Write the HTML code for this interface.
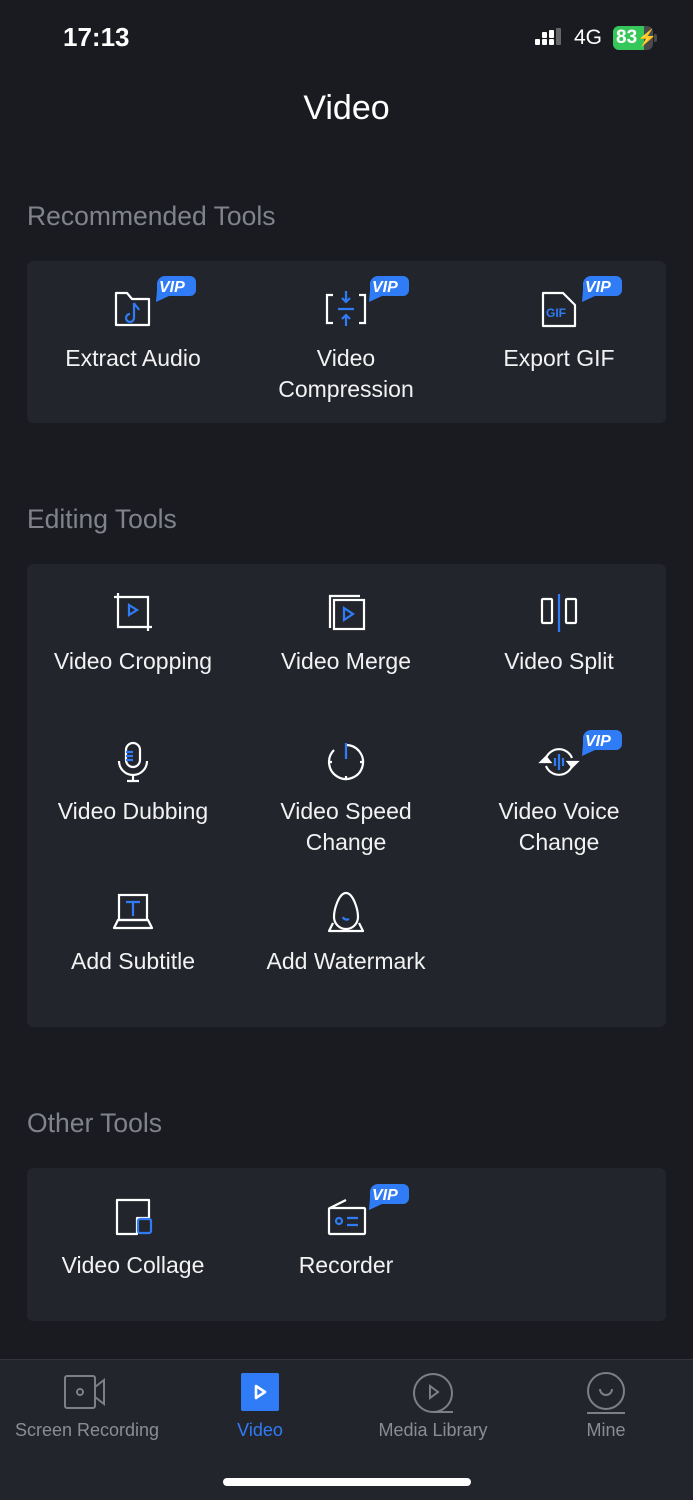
<!DOCTYPE html>
<html><head><meta charset="utf-8"><style>
*{margin:0;padding:0;box-sizing:border-box}
body{width:693px;height:1500px;background:#1a1b20;font-family:"Liberation Sans",sans-serif;color:#fff;position:relative;overflow:hidden}
.a{position:absolute}
.sec{position:absolute;left:27px;font-size:26.5px;color:#80838c}
.card{position:absolute;left:27px;width:639px;background:#23252d;border-radius:6px}
.lbl{position:absolute;width:220px;text-align:center;font-size:23px;line-height:31px;color:#f2f2f2}
.ic{position:absolute;width:44px;height:44px}
.vip{position:absolute;width:42px;height:26px}
.tab{position:absolute;top:1420px;font-size:18px;color:#8b8d94;text-align:center;width:200px}
</style></head><body>
<div class="a" style="left:63px;top:22px;font-size:26px;font-weight:bold">17:13</div>
<svg class="a" style="left:534px;top:28px" width="30" height="20"><g fill="#fff"><rect x="1" y="11" width="5" height="6" rx="1"/><rect x="8" y="11" width="5" height="6" rx="1"/><rect x="15" y="11" width="5" height="6" rx="1"/><rect x="8" y="4" width="5" height="6" rx="1"/><rect x="15" y="2" width="5" height="8" rx="1"/><rect x="22" y="0" width="5" height="17" rx="1" fill="#666"/></g></svg>
<div class="a" style="left:574px;top:26px;font-size:21px">4G</div>
<div class="a" style="left:613px;top:26px;width:40px;height:24px;border-radius:6px;background:#4a4a4c;overflow:hidden"><div style="width:31px;height:24px;background:#35c759"></div></div>
<div class="a" style="left:616px;top:26px;font-size:19px;font-weight:bold;line-height:24px">83<span style="font-size:16px">⚡</span></div>
<div class="a" style="left:654px;top:34px;width:3px;height:8px;background:#4a4a4c;border-radius:0 2px 2px 0"></div>
<div class="a" style="left:0;width:693px;top:89px;text-align:center;font-size:34px">Video</div>

<div class="sec" style="top:201px">Recommended Tools</div>
<div class="card" style="top:261px;height:162px"></div>
<div class="sec" style="top:504px">Editing Tools</div>
<div class="card" style="top:564px;height:463px"></div>
<div class="sec" style="top:1108px">Other Tools</div>
<div class="card" style="top:1168px;height:153px"></div>

<!-- Row1 -->
<svg class="ic" style="left:111px;top:286px" viewBox="0 0 44 44" fill="none" stroke="#fff" stroke-width="2.2"><path d="M5 7h11l5 6h17v26H5z" stroke-linejoin="round"/><path d="M23 17v15a4 4 0 1 1-4-4M23 17c1 3 4 4 5 7" stroke="#2f7cf6"/></svg>
<div class="lbl" style="left:23px;top:343px">Extract Audio</div>
<svg class="ic" style="left:324px;top:286px" viewBox="0 0 44 44" fill="none" stroke="#fff" stroke-width="2.2"><path d="M9 9H3v28h6M35 9h6v28h-6"/><g stroke="#2f7cf6"><path d="M22 5v11M18 12l4 4 4-4M14 23h16M22 40V29M18 33l4-4 4 4"/></g></svg>
<div class="lbl" style="left:236px;top:343px">Video<br>Compression</div>
<svg class="ic" style="left:537px;top:286px" viewBox="0 0 44 44" fill="none" stroke="#fff" stroke-width="2.2"><path d="M6 7h20l12 12v21H6z" stroke-linejoin="round"/><text x="9" y="31" fill="#2f7cf6" stroke="none" font-size="12" font-weight="bold" font-family="Liberation Sans">GIF</text></svg>
<div class="lbl" style="left:449px;top:343px">Export GIF</div>

<!-- Editing -->
<svg class="ic" style="left:111px;top:590px" viewBox="0 0 44 44" fill="none" stroke="#fff" stroke-width="2.2"><path d="M7 3v34h34M3 7h34v34"/><path d="M18 15l8 5-8 5z" stroke="#2f7cf6"/></svg>
<div class="lbl" style="left:23px;top:646px">Video Cropping</div>
<svg class="ic" style="left:324px;top:590px" viewBox="0 0 44 44" fill="none" stroke="#fff" stroke-width="2.2"><path d="M6 38V6h30"/><rect x="10" y="10" width="30" height="29"/><path d="M20 18l9 6-9 6z" stroke="#2f7cf6"/></svg>
<div class="lbl" style="left:236px;top:646px">Video Merge</div>
<svg class="ic" style="left:537px;top:590px" viewBox="0 0 44 44" fill="none" stroke="#fff" stroke-width="2.2"><rect x="5" y="9" width="10" height="24" rx="1"/><rect x="29" y="9" width="10" height="24" rx="1"/><path d="M22 4v38" stroke="#2f7cf6"/></svg>
<div class="lbl" style="left:449px;top:646px">Video Split</div>

<svg class="ic" style="left:111px;top:740px" viewBox="0 0 44 44" fill="none" stroke="#fff" stroke-width="2.2"><rect x="15" y="3" width="14" height="24" rx="7"/><path d="M8 21a14 14 0 0 0 28 0M22 35v6M16 41h12"/><path d="M15 12h7M15 16h7M15 20h7" stroke="#2f7cf6"/></svg>
<div class="lbl" style="left:23px;top:796px">Video Dubbing</div>
<svg class="ic" style="left:324px;top:740px" viewBox="0 0 44 44" fill="none" stroke="#fff" stroke-width="2.2"><path d="M22 5a17 17 0 1 1-12 5"/><path d="M5 22h3M36 22h3M22 36v3"/><path d="M22 3v16" stroke="#2f7cf6"/></svg>
<div class="lbl" style="left:236px;top:796px">Video Speed<br>Change</div>
<svg class="ic" style="left:537px;top:740px" viewBox="0 0 44 44" fill="none" stroke="#fff" stroke-width="2.2"><path d="M9 18a14 14 0 0 1 26 0M35 26a14 14 0 0 1-26 0"/><path d="M4 22l5-5 4 5zM31 22l4 5 5-5z" fill="#fff"/><path d="M18 18v8M22 14v16M26 18v8" stroke="#2f7cf6"/></svg>
<div class="lbl" style="left:449px;top:796px">Video Voice<br>Change</div>

<svg class="ic" style="left:111px;top:890px" viewBox="0 0 44 44" fill="none" stroke="#fff" stroke-width="2.2"><rect x="8" y="5" width="28" height="25"/><path d="M3 38l4-8h30l4 8z" stroke-linejoin="round"/><path d="M15 12h14M22 12v14" stroke="#2f7cf6"/></svg>
<div class="lbl" style="left:23px;top:946px">Add Subtitle</div>
<svg class="ic" style="left:324px;top:890px" viewBox="0 0 44 44" fill="none" stroke="#fff" stroke-width="2.2"><path d="M22 3c-7 0-12 16-12 24a12 12 0 0 0 24 0c0-8-5-24-12-24z"/><path d="M9 33l-4 8h34l-4-8" stroke-linejoin="round"/><path d="M19 27c1 3 4 3 6 2" stroke="#2f7cf6"/></svg>
<div class="lbl" style="left:236px;top:946px">Add Watermark</div>

<!-- Other -->
<svg class="ic" style="left:111px;top:1194px" viewBox="0 0 44 44" fill="none" stroke="#fff" stroke-width="2.2"><path d="M6 40V6h32v18H26v16z" stroke-linejoin="round"/><rect x="27" y="25" width="13" height="14" rx="2" stroke="#2f7cf6"/></svg>
<div class="lbl" style="left:23px;top:1250px">Video Collage</div>
<svg class="ic" style="left:324px;top:1194px" viewBox="0 0 44 44" fill="none" stroke="#fff" stroke-width="2.2"><path d="M6 14l16-8"/><rect x="5" y="14" width="36" height="26" rx="1"/><circle cx="15" cy="27" r="3" stroke="#2f7cf6"/><path d="M23 24h11M23 31h11" stroke="#2f7cf6"/></svg>
<div class="lbl" style="left:236px;top:1250px">Recorder</div>

<!-- VIP badges -->
<svg class="vip" style="left:154px;top:276px" viewBox="0 0 42 26"><path d="M11 0h25a6 6 0 0 1 6 6v8a6 6 0 0 1-6 6H15L2 26l1-12V8a8 8 0 0 1 8-8z" fill="#2f7cf6"/><text x="5" y="16" fill="#fff" font-size="16" font-weight="bold" font-style="italic" font-family="Liberation Sans">VIP</text></svg>
<svg class="vip" style="left:367px;top:276px" viewBox="0 0 42 26"><path d="M11 0h25a6 6 0 0 1 6 6v8a6 6 0 0 1-6 6H15L2 26l1-12V8a8 8 0 0 1 8-8z" fill="#2f7cf6"/><text x="5" y="16" fill="#fff" font-size="16" font-weight="bold" font-style="italic" font-family="Liberation Sans">VIP</text></svg>
<svg class="vip" style="left:580px;top:276px" viewBox="0 0 42 26"><path d="M11 0h25a6 6 0 0 1 6 6v8a6 6 0 0 1-6 6H15L2 26l1-12V8a8 8 0 0 1 8-8z" fill="#2f7cf6"/><text x="5" y="16" fill="#fff" font-size="16" font-weight="bold" font-style="italic" font-family="Liberation Sans">VIP</text></svg>
<svg class="vip" style="left:580px;top:730px" viewBox="0 0 42 26"><path d="M11 0h25a6 6 0 0 1 6 6v8a6 6 0 0 1-6 6H15L2 26l1-12V8a8 8 0 0 1 8-8z" fill="#2f7cf6"/><text x="5" y="16" fill="#fff" font-size="16" font-weight="bold" font-style="italic" font-family="Liberation Sans">VIP</text></svg>
<svg class="vip" style="left:367px;top:1184px" viewBox="0 0 42 26"><path d="M11 0h25a6 6 0 0 1 6 6v8a6 6 0 0 1-6 6H15L2 26l1-12V8a8 8 0 0 1 8-8z" fill="#2f7cf6"/><text x="5" y="16" fill="#fff" font-size="16" font-weight="bold" font-style="italic" font-family="Liberation Sans">VIP</text></svg>

<!-- Tab bar -->
<div class="a" style="left:0;top:1359px;width:693px;height:141px;background:#23252d;border-top:1px solid #33353c"></div>
<svg class="a" style="left:62px;top:1373px" width="50" height="40" fill="none" stroke="#7c7f87" stroke-width="2"><rect x="3" y="3" width="30" height="32" rx="2"/><circle cx="18" cy="19" r="3"/><path d="M33 14l9-7v24l-9-7"/></svg>
<div class="tab" style="left:-13px">Screen Recording</div>
<div class="a" style="left:241px;top:1373px;width:38px;height:38px;background:#2f7cf6;border-radius:2px"></div>
<svg class="a" style="left:250px;top:1382px" width="20" height="20" fill="none" stroke="#fff" stroke-width="2.6" stroke-linejoin="round"><path d="M6 4l9 6-9 6z"/></svg>
<div class="tab" style="left:160px;color:#2f7cf6">Video</div>
<svg class="a" style="left:410px;top:1371px" width="48" height="46" fill="none" stroke="#7c7f87" stroke-width="2"><circle cx="23" cy="22" r="19"/><path d="M23 41h20"/><path d="M20 15l8 6-8 6z"/></svg>
<div class="tab" style="left:333px">Media Library</div>
<svg class="a" style="left:584px;top:1370px" width="44" height="46" fill="none" stroke="#7c7f87" stroke-width="2"><circle cx="22" cy="21" r="18"/><path d="M3 43h38"/><path d="M16 19a6 6 0 0 0 12 0"/></svg>
<div class="tab" style="left:506px">Mine</div>
<div class="a" style="left:223px;top:1478px;width:248px;height:8px;border-radius:4px;background:#fff"></div>
</body></html>
